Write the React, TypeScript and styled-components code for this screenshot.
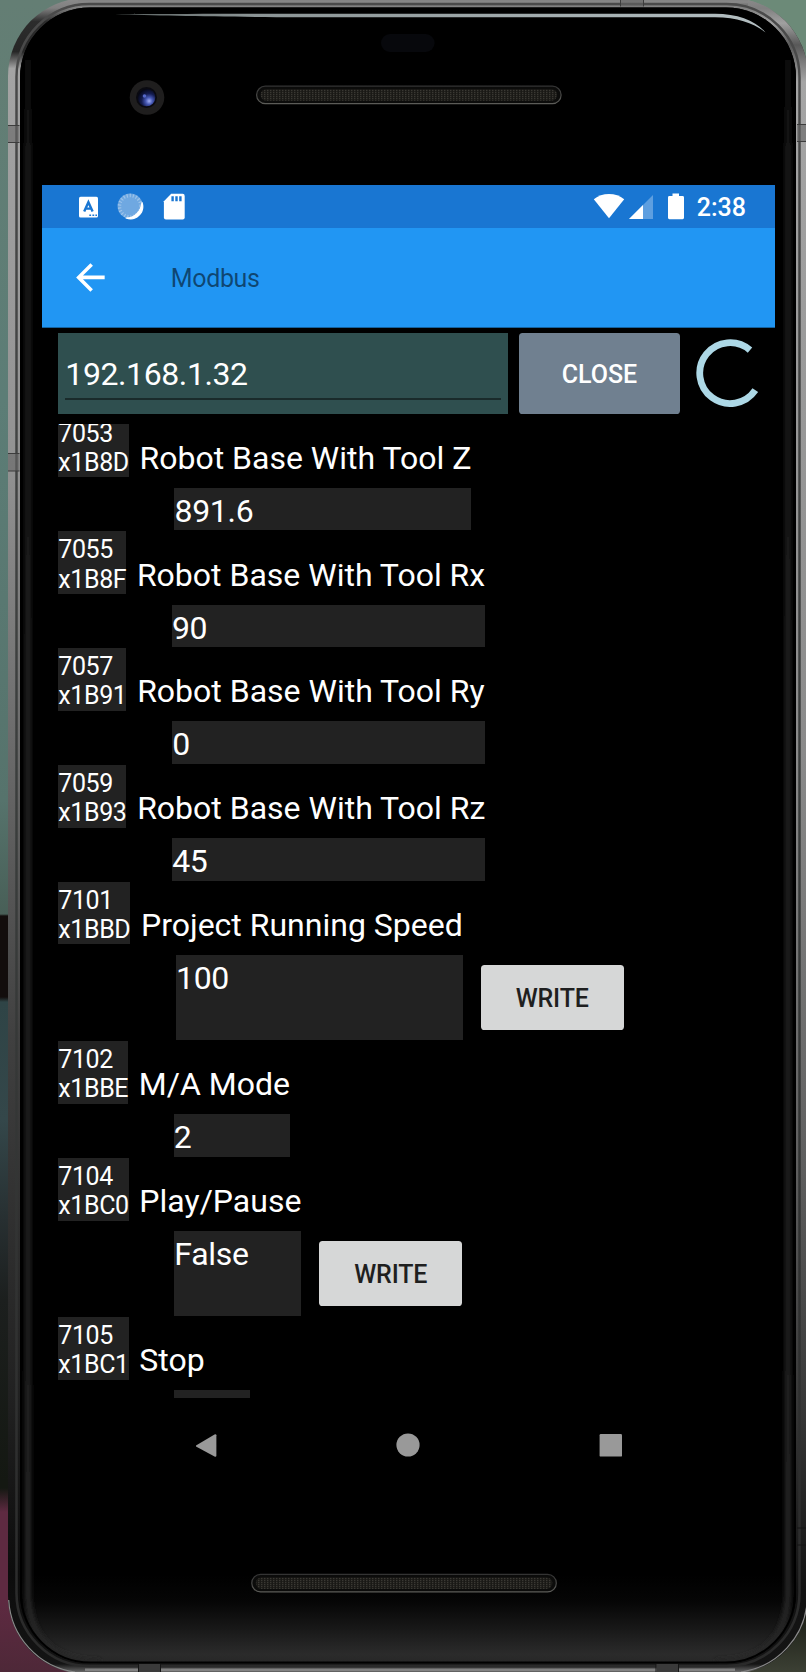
import React from 'react';
import styled, { createGlobalStyle } from 'styled-components';

const GlobalStyle = createGlobalStyle`
  * { box-sizing: border-box; }
  html, body { margin: 0; padding: 0; background: #000; }
  body { font-family: Roboto, "Liberation Sans", sans-serif; overflow: hidden; }
`;

const Desk = styled.div`
  position: relative;
  width: 806px;
  height: 1672px;
  overflow: hidden;
  padding: 185px 31px 0 42px;
  background:
    linear-gradient(180deg, transparent 0 1488px, #5e2a41 1512px 1600px, #4e2838 1672px) left / 90px 100% no-repeat,
    linear-gradient(180deg, #647e74 0, #5c7d76 400px, #56736c 800px, #485f57 914px, #120d0c 916px 997px, #2f4446 1002px, #34474a 1120px, #272f31 1220px, #1c1f1e 1300px, #141812 1480px) left / 90px 100% no-repeat,
    linear-gradient(180deg, #6c8a78 0, #6c8a78 200px, #14170f 1600px, #3c4034 1672px);
`;

const DeviceArt = styled.svg`
  position: absolute;
  inset: 0;
`;

const Screen = styled.main`
  position: relative;
  width: 733px;
  height: 1303px;
  display: flex;
  flex-direction: column;
  background: #000;
  color: #fff;
`;

const StatusBar = styled.div`
  flex: none;
  height: 43px;
  display: flex;
  align-items: center;
  justify-content: space-between;
  padding: 0 29px 0 36px;
  background: #1976d2;
`;

const IconGroup = styled.div`
  display: flex;
  align-items: center;
`;

const Clock = styled.span`
  margin-left: 12px;
  padding-top: 2px;
  font-size: 25px;
  font-weight: 500;
  line-height: 41px;
`;

const AppBar = styled.header`
  flex: none;
  height: 99.6px;
  display: flex;
  align-items: center;
  padding-left: 27px;
  background: #2196f3;
  border-bottom: 1px solid #14629f;
`;

const Title = styled.h1`
  margin: 3px 0 0 59px;
  font-size: 25px;
  font-weight: 400;
  letter-spacing: -0.35px;
  color: rgba(0, 0, 0, 0.54);
`;

const Connection = styled.section`
  flex: none;
  display: flex;
  align-items: center;
  height: 80.7px;
  margin: 5.4px 0 10.3px 16.3px;
`;

const Entry = styled.div`
  width: 450px;
  height: 100%;
  padding: 18px 7px 0;
  background: #2f4f4f;
  font-size: 32px;
`;

const EntryText = styled.div`
  height: 48.8px;
  line-height: 47px;
  letter-spacing: -0.4px;
  border-bottom: 2px solid #1a2b2b;
`;

const Button = styled.button<{ $tone: 'slate' | 'light' }>`
  flex: none;
  border: 0;
  padding: 2px 0 0;
  border-radius: 3.6px;
  font: 500 25px Roboto, "Liberation Sans", sans-serif;
  ${({ $tone }) =>
    $tone === 'slate'
      ? 'width: 161px; height: 80.7px; margin: 0 16.5px 0 10.7px; background: #708090; color: #fff;'
      : 'width: 143.3px; height: 65px; margin-left: 7.1px; background: #d6d7d7; color: #1f1f1f; letter-spacing: -0.15px;'}
`;

const RegisterList = styled.div`
  flex: none;
  height: 973.7px;
  overflow: hidden;
  display: flex;
  flex-direction: column;
  padding-left: 16px;
`;

const Register = styled.article`
  flex: none;
  display: grid;
  grid-template-columns: max-content max-content max-content;
  column-gap: 10.7px;
  row-gap: 10.4px;
  justify-content: start;
  margin-bottom: 0.9px;
  &:first-child { margin-top: -9.4px; }
`;

const Address = styled.div`
  height: 62.8px;
  padding: 4px 0 0 0.3px;
  background: #222;
  font-size: 25px;
  line-height: 29.3px;
  letter-spacing: -0.4px;
`;

const Label = styled.div`
  align-self: end;
  height: 42.6px;
  font-size: 32px;
  line-height: 46px;
`;

const Value = styled.div<{ $tall?: boolean }>`
  grid-column: 2;
  min-width: 75.6px;
  margin-left: 35px;
  height: ${({ $tall }) => ($tall ? 85.3 : 42.7)}px;
  background: #222;
  font-size: 32px;
  line-height: 46px;
  letter-spacing: -0.3px;
`;

const WriteCell = styled.div`
  display: flex;
  align-items: center;
`;

const NavBar = styled.nav`
  flex: 1;
  display: flex;
  justify-content: space-between;
  align-items: flex-start;
  padding: 35px 152.5px 0 151.5px;
`;

interface Reg {
  dec: string;
  hex: string;
  name: string;
  value: string;
  writable?: boolean;
}

const registers: Reg[] = [
  { dec: '7053', hex: 'x1B8D', name: 'Robot Base With Tool Z', value: '891.6' },
  { dec: '7055', hex: 'x1B8F', name: 'Robot Base With Tool Rx', value: '90' },
  { dec: '7057', hex: 'x1B91', name: 'Robot Base With Tool Ry', value: '0' },
  { dec: '7059', hex: 'x1B93', name: 'Robot Base With Tool Rz', value: '45' },
  { dec: '7101', hex: 'x1BBD', name: 'Project Running Speed', value: '100', writable: true },
  { dec: '7102', hex: 'x1BBE', name: 'M/A Mode', value: '2' },
  { dec: '7104', hex: 'x1BC0', name: 'Play/Pause', value: 'False', writable: true },
  { dec: '7105', hex: 'x1BC1', name: 'Stop', value: '' },
];

const Speaker = ({ x, y }: { x: number; y: number }) => (
  <g>
    <rect x={x} y={y} width="304.5" height="17.5" rx="8.7" fill="#0c0c0b" stroke="url(#lip)" strokeWidth="1.2" />
    <rect x={x + 4} y={y + 3} width="296.5" height="11.5" rx="5.7" fill="url(#mesh)" />
  </g>
);

const Device = () => (
  <DeviceArt width="806" height="1672" viewBox="0 0 806 1672" aria-hidden="true">
    <defs>
      <linearGradient id="metal" x1="0" y1="0" x2="0" y2="1">
        <stop offset="0" stopColor="#8c8c8c" />
        <stop offset="0.006" stopColor="#808080" />
        <stop offset="0.014" stopColor="#2c2c2c" />
        <stop offset="0.032" stopColor="#262626" />
        <stop offset="0.042" stopColor="#a4a4a4" />
        <stop offset="0.28" stopColor="#929292" />
        <stop offset="0.5" stopColor="#5e5e5e" />
        <stop offset="0.62" stopColor="#404040" />
        <stop offset="0.84" stopColor="#202020" />
        <stop offset="0.94" stopColor="#0c0c0c" />
        <stop offset="0.994" stopColor="#141414" />
        <stop offset="1" stopColor="#7c7c7c" />
      </linearGradient>
      <linearGradient id="metalRight" x1="0" y1="0" x2="0" y2="1">
        <stop offset="0" stopColor="#8c8c8c" />
        <stop offset="0.006" stopColor="#808080" />
        <stop offset="0.015" stopColor="#a0a0a0" />
        <stop offset="0.028" stopColor="#585858" />
        <stop offset="0.05" stopColor="#a5a5a5" />
        <stop offset="0.45" stopColor="#8a8a8a" />
        <stop offset="0.7" stopColor="#5e5e5e" />
        <stop offset="0.85" stopColor="#343434" />
        <stop offset="0.95" stopColor="#121212" />
        <stop offset="0.994" stopColor="#141414" />
        <stop offset="1" stopColor="#7c7c7c" />
      </linearGradient>
      <linearGradient id="groove" x1="0" y1="0" x2="0" y2="1">
        <stop offset="0" stopColor="#4a4a4a" />
        <stop offset="0.5" stopColor="#3a3d3c" />
        <stop offset="1" stopColor="#2a2a2a" />
      </linearGradient>
      <linearGradient id="chin" x1="0" y1="0" x2="0" y2="1">
        <stop offset="0" stopColor="#000" />
        <stop offset="0.3" stopColor="#060606" />
        <stop offset="0.6" stopColor="#181818" />
        <stop offset="0.88" stopColor="#2b2b2b" />
        <stop offset="1" stopColor="#262626" />
      </linearGradient>
      <linearGradient id="sheen" gradientUnits="userSpaceOnUse" x1="0" y1="30" x2="0" y2="1664">
        <stop offset="0" stopColor="#000" />
        <stop offset="0.08" stopColor="#1d1d1d" />
        <stop offset="1" stopColor="#262626" />
      </linearGradient>
      <linearGradient id="gloss" x1="0" y1="0" x2="1" y2="0">
        <stop offset="0" stopColor="#59605f" />
        <stop offset="0.2" stopColor="#8a9394" />
        <stop offset="1" stopColor="#b4bfc2" />
      </linearGradient>
      <linearGradient id="lip" x1="0" y1="0" x2="0" y2="1">
        <stop offset="0" stopColor="#333" />
        <stop offset="1" stopColor="#5c5c58" />
      </linearGradient>
      <radialGradient id="lens" cx="0.65" cy="0.7" r="0.7">
        <stop offset="0" stopColor="#a3b0f4" />
        <stop offset="0.28" stopColor="#4658b4" />
        <stop offset="0.6" stopColor="#141c50" />
        <stop offset="1" stopColor="#050714" />
      </radialGradient>
      <pattern id="mesh" width="3" height="2" patternUnits="userSpaceOnUse">
        <rect width="3" height="2" fill="#1a1916" />
        <rect width="1.4" height="1.2" fill="#3a3833" />
      </pattern>
      <filter id="soft" filterUnits="userSpaceOnUse" x="0" y="0" width="806" height="1672">
        <feGaussianBlur stdDeviation="2" />
      </filter>
      <clipPath id="glass">
        <rect x="20" y="7.5" width="776" height="1656" rx="70" />
      </clipPath>
      <clipPath id="rightHalf">
        <rect x="406" y="-10" width="410" height="1700" />
      </clipPath>
    </defs>

    <rect x="8" y="-2" width="800" height="1676" rx="78" fill="url(#metal)" />
    <rect x="8" y="-2" width="800" height="1676" rx="78" fill="url(#metalRight)" clipPath="url(#rightHalf)" />
    <path d="M78 0.5H748" stroke="#858585" strokeWidth="2" />
    <path d="M78 4.5H748" stroke="#777" strokeWidth="2" />
    <path d="M85 1669.8H735" stroke="#828282" strokeWidth="2.6" />
    <path d="M8.7 1600A77 77 0 0 0 75 1672M807.3 1600A77 77 0 0 1 741 1672" fill="none" stroke="#8a8a8a" strokeWidth="1.2" />
    <rect x="16.5" y="4" width="783" height="1662" rx="73" fill="none" stroke="url(#groove)" strokeWidth="2.5" />
    <g fill="#666" fillOpacity="0.6">
      <path d="M8 125.5H19.5V142.5H8z" />
      <path d="M8 453.5H19.5V471H8z" />
      <path d="M797 124.5H807V141.5H797z" />
      <path d="M620.5 -1H643V6.5H620.5z" />
    </g>
    <path
      d="M8 125.5H19.5M8 142.5H19.5M8 453.5H19.5M8 471H19.5M797 124.5H807M797 141.5H807M620.5 0V6.5M643.5 0V6.5"
      stroke="#3c3c3c"
    />
    <path
      d="M797 1528H807M797 1545H807M138.5 1664V1672M160.5 1664V1672M656 1664V1672M678.5 1664V1672"
      stroke="#151515"
    />
    <path d="M139 1664H160V1672H139zM656.5 1664H678V1672H656.5z" fill="#3a3a3a" />

    <g clipPath="url(#glass)">
      <rect x="20" y="7" width="776" height="1658" fill="#000" />
      <rect x="20" y="1575" width="776" height="90" fill="url(#chin)" />
      <path d="M28 30V1590Q28 1662 100 1662" fill="none" stroke="url(#sheen)" strokeWidth="6" filter="url(#soft)" />
      <path d="M788 30V1590Q788 1662 716 1662" fill="none" stroke="url(#sheen)" strokeWidth="6" filter="url(#soft)" />
      <rect x="20.5" y="8" width="775" height="1655" rx="70" fill="none" stroke="#000" strokeWidth="3" />
    </g>

    <path d="M115 14.2C180 14 230 13.8 300 13.8H715C738 13.8 756 21 765.5 32.5C754 23.5 738 17.3 715 17.3H300C220 16.8 160 15.6 115 14.2z" fill="url(#gloss)" />
    <rect x="381" y="34" width="53.6" height="18" rx="9" fill="#07080c" />
    <circle cx="147" cy="97.5" r="17.3" fill="#1f1e1e" />
    <circle cx="146.5" cy="97.5" r="10.5" fill="#0a0a10" />
    <circle cx="146.5" cy="97.5" r="8.8" fill="url(#lens)" />
    <circle cx="144.5" cy="96" r="1.8" fill="#5568c8" />
    <Speaker x={256.6} y={86.2} />
    <Speaker x={251.8} y={1574.4} />
  </DeviceArt>
);

const KeyboardIcon = () => (
  <svg width="21" height="22" viewBox="0 0 21 22">
    <rect x="1" y="0.7" width="19" height="20.8" rx="1.6" fill="#fff" />
    <path d="M6.2 15.6L10.4 6.2L14.6 15.6M7.8 12.6H13" fill="none" stroke="#1976d2" strokeWidth="2.4" />
    <path d="M11.3 18.4h1.8v1.6h-1.8zM14.4 18.4h1.8v1.6h-1.8zM17.4 18.4h1.6v1.6h-1.6z" fill="#1976d2" />
  </svg>
);

const SyncGlyph = styled.svg`
  margin-left: 18px;
`;

const SyncIcon = () => (
  <SyncGlyph width="27" height="27" viewBox="0 0 27 27">
    <circle cx="13.2" cy="13.2" r="12.6" fill="#6fa8e1" />
    <circle cx="13.2" cy="13.2" r="10.7" fill="none" stroke="#9cc3ea" strokeWidth="3.4" strokeDasharray="1.2 1.9" />
    <path d="M25 9.5A12.3 12.3 0 0 1 9 25C17 25.4 24 19 25 9.5z" fill="#fff" stroke="#fff" strokeWidth="1.2" strokeLinejoin="round" />
  </SyncGlyph>
);

const SdGlyph = styled.svg`
  margin-left: 18.5px;
`;

const SdIcon = () => (
  <SdGlyph width="22" height="27" viewBox="0 0 22 27">
    <path d="M8.2 0.8H19.6Q21.7 0.8 21.7 2.9V24.4Q21.7 26.4 19.6 26.4H2.9Q0.9 26.4 0.9 24.4V8.2z" fill="#fff" />
    <path d="M8.4 3.2h2.4v5H8.4zM12.3 3.2h2.4v5h-2.4zM16.2 3.2h2.4v5h-2.4z" fill="#1976d2" />
  </SdGlyph>
);

const WifiIcon = () => (
  <svg width="32" height="27" viewBox="0 0 32 27">
    <path d="M16 25.2L0.8 6.2C5 2.9 10.3 1.1 16 1.1S27 2.9 31.2 6.2z" fill="#fff" />
  </svg>
);

const SignalGlyph = styled.svg`
  margin-left: 3px;
`;

const SignalIcon = () => (
  <SignalGlyph width="26" height="27" viewBox="0 0 26 27">
    <path d="M1 26L25 2V26z" fill="#5e9fe0" />
    <path d="M1 26L15 12V26z" fill="#fff" />
  </SignalGlyph>
);

const BatteryGlyph = styled.svg`
  margin-left: 13px;
`;

const BatteryIcon = () => (
  <BatteryGlyph width="18" height="27" viewBox="0 0 18 27">
    <path d="M5.5 0.4H12V3H15.6Q17 3 17 4.4V24.8Q17 26.2 15.6 26.2H2.4Q1 26.2 1 24.8V4.4Q1 3 2.4 3H5.5z" fill="#fff" />
  </BatteryGlyph>
);

const BackArrow = () => (
  <svg width="42.8" height="42.8" viewBox="0 0 24 24">
    <path d="M20 11H7.83l5.59-5.59L12 4l-8 8 8 8 1.41-1.41L7.83 13H20v-2z" fill="#fff" />
  </svg>
);

const Spinner = () => (
  <svg width="68" height="68" viewBox="0 0 68 68">
    <path d="M54 11.1A30.4 30.4 0 1 0 59.3 51.2" fill="none" stroke="#add8e6" strokeWidth="6.8" />
  </svg>
);

export default function App() {
  return (
    <>
      <GlobalStyle />
      <Desk>
        <Device />
        <Screen>
          <StatusBar>
            <IconGroup>
              <KeyboardIcon />
              <SyncIcon />
              <SdIcon />
            </IconGroup>
            <IconGroup>
              <WifiIcon />
              <SignalIcon />
              <BatteryIcon />
              <Clock>2:38</Clock>
            </IconGroup>
          </StatusBar>
          <AppBar>
            <BackArrow />
            <Title>Modbus</Title>
          </AppBar>
          <Connection>
            <Entry>
              <EntryText>192.168.1.32</EntryText>
            </Entry>
            <Button $tone="slate">CLOSE</Button>
            <Spinner />
          </Connection>
          <RegisterList>
            {registers.map((r) => (
              <Register key={r.dec}>
                <Address>
                  {r.dec}
                  <br />
                  {r.hex}
                </Address>
                <Label>{r.name}</Label>
                <Value $tall={r.writable}>{r.value}</Value>
                {r.writable && (
                  <WriteCell>
                    <Button $tone="light">WRITE</Button>
                  </WriteCell>
                )}
              </Register>
            ))}
          </RegisterList>
          <NavBar>
            <svg width="24" height="26" viewBox="0 0 24 26">
              <path d="M2 12.5L20.5 1.4Q22.2 0.6 22.4 2.2V22.8Q22.2 24.4 20.5 23.6L2 13.6z" fill="#999" />
            </svg>
            <svg width="24" height="26" viewBox="0 0 24 26">
              <circle cx="12" cy="12" r="11.6" fill="#999" />
            </svg>
            <svg width="24" height="26" viewBox="0 0 24 26">
              <rect x="0.6" y="1" width="22.4" height="22.6" rx="1.2" fill="#999" />
            </svg>
          </NavBar>
        </Screen>
      </Desk>
    </>
  );
}
